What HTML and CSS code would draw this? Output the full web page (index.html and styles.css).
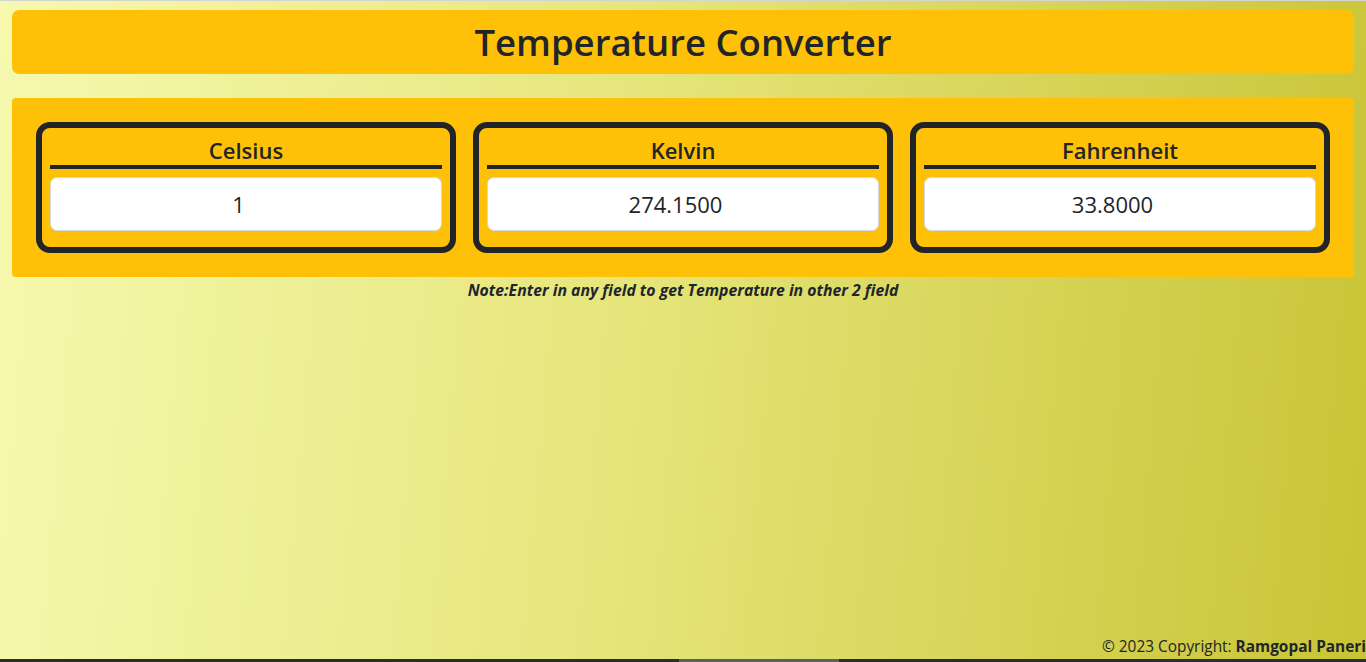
FILE: index.html
```html
<!DOCTYPE html>
<html lang="en">
<head>
<meta charset="utf-8">
<title>Temperature Converter</title>
<link rel="stylesheet" href="styles.css">
</head>
<body>
<div class="page">
  <header class="title-bar">
    <h1 class="title">Temperature Converter</h1>
  </header>
  <main class="panel">
    <section class="card">
      <h4 class="card-head">Celsius</h4>
      <input class="field" type="number" value="1">
    </section>
    <section class="card">
      <h4 class="card-head">Kelvin</h4>
      <input class="field" type="number" value="274.1500">
    </section>
    <section class="card">
      <h4 class="card-head">Fahrenheit</h4>
      <input class="field" type="number" value="33.8000">
    </section>
  </main>
  <p class="note">Note:Enter in any field to get Temperature in other 2 field</p>
  <div class="spacer"></div>
  <footer class="footer">© 2023 Copyright: <b>Ramgopal Paneri</b></footer>
  <div class="scrollbar"><div class="thumb"></div></div>
</div>
</body>
</html>
```
FILE: styles.css
```css
* { box-sizing: border-box; }
html, body { margin: 0; padding: 0; height: 100%; overflow: hidden; }
body {
  font-family: "Open Sans", "Noto Sans", sans-serif;
  color: #212529;
  background: linear-gradient(95deg, #f6f9ae 0%, #e6e67c 45%, #c9c436 100%);
}
.page {
  height: 662px;
  display: flex;
  flex-direction: column;
  border-top: 1px solid #d4d4d4;
}
.title-bar {
  margin: 9px 12px 0;
  height: 64px;
  background: #ffc107;
  border-radius: 7px;
  display: flex;
  align-items: center;
  justify-content: center;
}
.title {
  margin: 0;
  font-size: 36.5px;
  font-weight: 600;
  line-height: 1.2;
  padding-top: 2px;
}
.panel {
  margin: 24px 12px 0;
  height: 179px;
  background: #ffc107;
  border-radius: 4px;
  padding: 24px 24px 0;
  display: flex;
  gap: 17px;
}
.card {
  flex: 1;
  height: 131px;
  border: 6px solid #212529;
  border-radius: 14px;
  padding: 8px 8px 0;
  display: flex;
  flex-direction: column;
}
.card-head {
  margin: 0;
  height: 33px;
  font-size: 22px;
  font-weight: 600;
  line-height: 29px;
  text-align: center;
  border-bottom: 4px solid #212529;
}
.field {
  margin-top: 8px;
  height: 54px;
  width: 100%;
  background: #fff;
  border: 1px solid #d6d9dc;
  border-radius: 7px;
  padding: 0 12px;
  font-family: inherit;
  font-size: 22px;
  color: #212529;
  text-align: center;
  outline: none;
}
.note {
  margin: 2px 0 0;
  text-align: center;
  font-size: 15.8px;
  font-weight: 700;
  font-style: italic;
  line-height: 22px;
}
.spacer { flex: 1; }
.footer {
  text-align: right;
  font-size: 15.4px;
  line-height: 20px;
  white-space: nowrap;
  padding-bottom: 2px;
}
.footer b { font-weight: 700; }
.scrollbar {
  height: 3px;
  background: #25302a;
  display: flex;
  padding-left: 679px;
}
.thumb {
  width: 160px;
  height: 3px;
  background: #5a605a;
}
```
